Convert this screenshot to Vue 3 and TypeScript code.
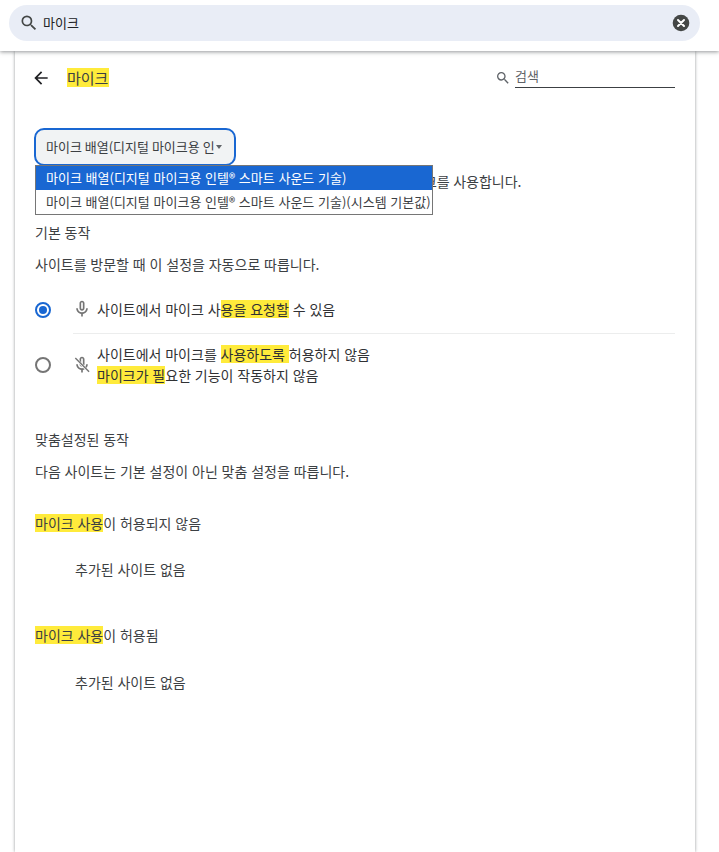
<script setup lang="ts">
const options = [
  '마이크 배열(디지털 마이크용 인텔® 스마트 사운드 기술)',
  '마이크 배열(디지털 마이크용 인텔® 스마트 사운드 기술)(시스템 기본값)',
]
</script>

<template>
  <div class="page">
    <header class="topbar">
      <div class="pill">
        <svg class="pill-search" viewBox="0 0 24 24" width="20" height="20"><path fill="#444746" d="M15.5 14h-.79l-.28-.27A6.47 6.47 0 0 0 16 9.5 6.5 6.5 0 1 0 9.5 16c1.61 0 3.09-.59 4.23-1.57l.27.28v.79l5 4.99L20.49 19l-4.99-5zm-6 0C7.01 14 5 11.99 5 9.5S7.01 5 9.5 5 14 7.01 14 9.5 11.99 14 9.5 14z"/></svg>
        <span class="pill-text">마이크</span>
        <svg class="pill-clear" viewBox="0 0 18 18" width="18" height="18"><circle cx="9" cy="9" r="8.3" fill="#444746"/><path d="M6 6l6 6M12 6l-6 6" stroke="#fff" stroke-width="2" stroke-linecap="round"/></svg>
      </div>
    </header>
    <main class="card">
      <div class="head">
        <svg class="back" viewBox="0 0 24 24" width="20" height="20"><path fill="#202124" d="M20 11H7.83l5.59-5.59L12 4l-8 8 8 8 1.41-1.41L7.83 13H20v-2z"/></svg>
        <h1 class="title"><mark>마이크</mark></h1>
        <div class="search">
          <svg viewBox="0 0 24 24" width="16" height="16"><path fill="#5f6368" d="M15.5 14h-.79l-.28-.27A6.47 6.47 0 0 0 16 9.5 6.5 6.5 0 1 0 9.5 16c1.61 0 3.09-.59 4.23-1.57l.27.28v.79l5 4.99L20.49 19l-4.99-5zm-6 0C7.01 14 5 11.99 5 9.5S7.01 5 9.5 5 14 7.01 14 9.5 11.99 14 9.5 14z"/></svg>
          <span class="search-input">검색</span>
        </div>
      </div>

      <div class="select-wrap">
        <div class="select"><span class="select-text">마이크 배열(디지털 마이크용 인</span><i class="caret"></i></div>
        <ul class="menu">
          <li v-for="(o, i) in options" :key="o" :class="{ on: i === 0 }">{{ o }}</li>
        </ul>
      </div>

      <p class="desc">일반적으로 사이트는 영상 채팅 같은 커뮤니케이션 기능을 위해 마이크를 사용합니다.</p>

      <h2 class="sec first">기본 동작</h2>
      <p class="sub">사이트를 방문할 때 이 설정을 자동으로 따릅니다.</p>

      <div class="radio-row one">
        <span class="radio checked"></span>
        <div class="radio-body bordered">
          <svg viewBox="0 0 24 24" width="20" height="20"><path fill="#757575" d="M12 14c1.66 0 3-1.34 3-3V5c0-1.66-1.34-3-3-3S9 3.34 9 5v6c0 1.66 1.34 3 3 3zm-1-9c0-.55.45-1 1-1s1 .45 1 1v6c0 .55-.45 1-1 1s-1-.45-1-1V5zm6 6c0 2.76-2.24 5-5 5s-5-2.24-5-5H5c0 3.53 2.61 6.43 6 6.92V21h2v-3.08c3.39-.49 6-3.39 6-6.92h-2z"/></svg>
          <div class="radio-text">사이트에서 마이크 사<mark>용을 요청할</mark> 수 있음</div>
        </div>
      </div>
      <div class="radio-row two">
        <span class="radio"></span>
        <div class="radio-body">
          <svg viewBox="0 0 24 24" width="20" height="20"><path fill="#757575" d="M12 14c1.66 0 3-1.34 3-3V5c0-1.66-1.34-3-3-3S9 3.34 9 5v6c0 1.66 1.34 3 3 3zm-1-9c0-.55.45-1 1-1s1 .45 1 1v6c0 .55-.45 1-1 1s-1-.45-1-1V5zm6 6c0 2.76-2.24 5-5 5s-5-2.24-5-5H5c0 3.53 2.61 6.43 6 6.92V21h2v-3.08c3.39-.49 6-3.39 6-6.92h-2z"/><path d="M4 4l16 16" stroke="#fff" stroke-width="3.2"/><path d="M4 3.5l16.5 16.5" stroke="#757575" stroke-width="1.7"/></svg>
          <div class="radio-text">
            <div>사이트에서 마이크를 <mark>사용하도록 </mark>허용하지 않음</div>
            <div><mark>마이크가 필</mark>요한 기능이 작동하지 않음</div>
          </div>
        </div>
      </div>

      <h2 class="sec custom">맞춤설정된 동작</h2>
      <p class="sub">다음 사이트는 기본 설정이 아닌 맞춤 설정을 따릅니다.</p>

      <h3 class="list-title blocked"><mark>마이크 사용</mark>이 허용되지 않음</h3>
      <p class="empty">추가된 사이트 없음</p>
      <h3 class="list-title allowed"><mark>마이크 사용</mark>이 허용됨</h3>
      <p class="empty last">추가된 사이트 없음</p>
    </main>
  </div>
</template>

<style>
html, body { margin: 0; background: #fff; overflow: hidden; }
</style>

<style scoped>
.page {
  width: 719px; height: 852px; overflow: hidden; position: relative; background: #fff;
  font-family: "Noto Sans CJK KR", "Noto Sans", sans-serif; font-size: 14px; word-spacing: .7px; color: #3c4043; line-height: 20px;
}
mark { display: inline-block; line-height: 18px; white-space: pre; background: #ffeb3b; color: #3c4043; }
p, h1, h2, h3, ul { margin: 0; padding: 0; font-weight: 400; font-size: inherit; }
.topbar {
  position: relative; z-index: 2; height: 51px; background: #fff; box-sizing: border-box; padding: 5px 19px 0 9px;
  box-shadow: 0 1px 4px rgba(60, 64, 67, .55);
}
.pill {
  height: 36px; background: #e9edf6; border-radius: 18px; display: flex; align-items: center; padding: 0 10px 0 10px;
  font-size: 13px;
}
.pill-search { flex: none; margin-top: -1px; }
.pill-text { margin-left: 4px; color: #202124; }
.pill-clear { margin-left: auto; }
.card {
  width: 680px; margin-left: 15px; height: 801px; box-sizing: border-box; background: #fff; padding: 0 20px;
  box-shadow: 0 0 3px rgba(60, 64, 67, .55);
}
.head { display: flex; align-items: center; height: 54px; }
.back { margin-left: -4px; flex: none; }
.title { font-size: 15px; margin: -1px 0 0 16px; line-height: 19px; word-spacing: 0; }
.title mark { line-height: 19px; padding-right: 1px; }
.search { margin-left: auto; display: flex; align-items: center; gap: 4px; font-size: 13px; }
.search svg { margin-left: -1px; }
.search-input { width: 160px; height: 20px; border-bottom: 1px solid #3c4043; color: #5f6368; line-height: 16px; box-sizing: border-box; }
.select-wrap { position: relative; margin-top: 23px; height: 38px; }
.select {
  width: 202px; height: 38px; margin-left: -1px; box-sizing: border-box; border: 2px solid #1967d2; border-radius: 10px; background: #f1f3f4;
  display: flex; align-items: center; padding: 0 10px; color: #3c4043; white-space: nowrap; overflow: hidden; font-size: 13px; word-spacing: 0;
}
.select-text { flex: none; }
.caret { flex: none; margin-left: 1px; width: 0; height: 0; border: 3.5px solid transparent; border-top: 4px solid #5f6368; border-bottom: 0; }
.menu {
  position: absolute; z-index: 1; left: 0; top: 37px; width: 398px; box-sizing: border-box; list-style: none; background: #fff; border: 1px solid #767676; font-size: 13px; word-spacing: .8px;
}
.menu li { height: 24px; line-height: 24px; padding-left: 10px; white-space: nowrap; color: #3c4043; }
.menu li.on { background: #1967d2; color: #fff; }
.desc { margin-top: 5px; white-space: nowrap; word-spacing: .4px; }
.sec.first { margin-top: 31px; }
.sub { margin-top: 12px; }
.radio-row { display: flex; align-items: center; }
.radio-row.one { margin-top: 11px; height: 49px; }
.radio-row.two { height: 62px; }
.radio { width: 16px; height: 16px; box-sizing: border-box; border: 2px solid #757575; border-radius: 50%; flex: none; position: relative; }
.radio.checked { border-color: #1967d2; }
.radio.checked::after { content: ""; position: absolute; left: 2px; top: 2px; width: 8px; height: 8px; border-radius: 50%; background: #1967d2; }
.radio-body { flex: 1; align-self: stretch; margin-left: 22px; display: flex; align-items: center; gap: 5px; }
.radio-body svg { flex: none; margin-left: -1px; }
.radio-body.bordered { border-bottom: 1px solid #eceded; }
.radio-text { color: #303134; line-height: 21px; }
.radio-text mark { color: #303134; }
.sec.custom { margin-top: 33px; }
.list-title.blocked { margin-top: 32px; }
.list-title.allowed { margin-top: 46px; }
.empty { margin-top: 26px; padding-left: 40px; color: #3c4043; }
.empty.last { margin-top: 27px; }
</style>
